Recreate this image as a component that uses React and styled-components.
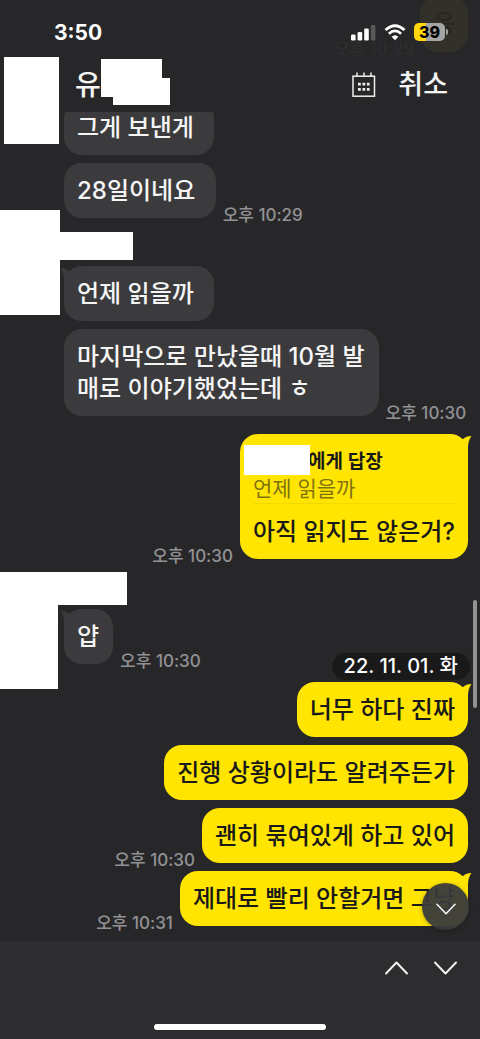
import styled, { createGlobalStyle } from "styled-components";

const App = () => {
  return (
    <Screen>
      <GlobalStyle />
      <Header>
        <GhostBubble aria-hidden="true">응</GhostBubble>
        <GhostTime aria-hidden="true">오후 10:29</GhostTime>
        <StatusBar>
          <Clock>3:50</Clock>
          <StatusIcons>
            <SignalIcon />
            <WifiIcon />
            <Battery>
              <BatteryLevel>39</BatteryLevel>
              <BatteryCap />
            </Battery>
          </StatusIcons>
        </StatusBar>
        <NavBar>
          <Title>유</Title>
          <NavButton aria-label="날짜 선택">
            <CalendarIcon />
          </NavButton>
          <NavButton>취소</NavButton>
        </NavBar>
        <Mask $x={4} $y={57} $w={55} $h={87} />
        <Mask $x={101} $y={59} $w={61} $h={38} />
        <Mask $x={113} $y={78} $w={57} $h={27} />
      </Header>

      <Chat>
        <Group>
          <Message text={"그게 보낸게 "} />
          <Message text={"28일이네요 "} time="오후 10:29" />
        </Group>
        <Group $gap={16}>
          <Mask $x={0} $y={-24} $w={60} $h={105} />
          <Mask $x={60} $y={-2} $w={73} $h={28} />
          <Sender />
          <Message text={"언제 읽을까 "} tail />
          <Message
            text={"마지막으로 만났을때 10월 발\n매로 이야기했었는데 ㅎ"}
            time="오후 10:30"
          />
        </Group>
        <Group $gap={18}>
          <Row $mine>
            <Bubble $mine>
              <Tail mine />
              <Mask $x={4} $y={11} $w={66} $h={30} />
              <ReplyTo>에게 답장</ReplyTo>
              <Quote>언제 읽을까</Quote>
              아직 읽지도 않은거?
            </Bubble>
            <Time>오후 10:30</Time>
          </Row>
        </Group>
        <Group $gap={18}>
          <Mask $x={0} $y={-5} $w={127} $h={33} />
          <Mask $x={0} $y={28} $w={58} $h={84} />
          <Sender />
          <Message text="얍" time="오후 10:30" tail />
        </Group>
        <Group $gap={18}>
          <DateChip>22. 11. 01. 화</DateChip>
          <Message mine text="너무 하다 진짜" tail />
          <Message mine text="진행 상황이라도 알려주든가" />
          <Message mine text="괜히 묶여있게 하고 있어" time="오후 10:30" />
          <Message mine text="제대로 빨리 안할거면 그냥" time="오후 10:31" tail />
        </Group>
        <ScrollThumb />
        <JumpButton aria-label="맨 아래로">
          <Chevron width={20} />
        </JumpButton>
      </Chat>

      <Footer>
        <SearchNav>
          <NavButton aria-label="이전 결과">
            <Chevron width={23} up />
          </NavButton>
          <NavButton aria-label="다음 결과">
            <Chevron width={23} />
          </NavButton>
        </SearchNav>
        <HomeIndicator />
      </Footer>
    </Screen>
  );
};

const Message = ({ text, time, mine, tail }) => (
  <Row $mine={mine}>
    <Bubble $mine={mine}>
      {tail && <Tail mine={mine} />}
      {text}
    </Bubble>
    {time && <Time>{time}</Time>}
  </Row>
);

const Tail = ({ mine }) => (
  <TailSvg $mine={mine} width="16" height="20" viewBox="0 0 16 20">
    <path d="M4 8 L7 5 Q10 2.2 15.5 2 Q12.3 6 12 13 L12 18 L4 18 Z" />
  </TailSvg>
);

const SignalIcon = () => (
  <svg width="25" height="17" viewBox="0 0 25 17" fill="#fff">
    <rect x="0" y="10.5" width="4.6" height="6" rx="1.3" />
    <rect x="6.6" y="8" width="4.6" height="8.5" rx="1.3" />
    <rect x="13.2" y="4.5" width="4.6" height="12" rx="1.3" />
    <rect x="19.8" y="1" width="4.6" height="15.5" rx="1.3" fill="#59595b" />
  </svg>
);

const WifiIcon = () => (
  <svg width="22" height="17" viewBox="0 0 22 17" fill="none">
    <path d="M1.5 6 Q11 -2.6 20.5 6" stroke="#fff" strokeWidth="2.8" />
    <path d="M4.9 9.7 Q11 4.2 17.1 9.7" stroke="#fff" strokeWidth="2.7" />
    <path d="M7.6 12.8 Q11 9.8 14.4 12.8 L11 16.2 Z" fill="#fff" />
  </svg>
);

const CalendarIcon = () => (
  <svg width="24" height="26" viewBox="0 0 24 26" fill="none" stroke="#f0f0f0">
    <rect x="1" y="4.2" width="21.5" height="20" strokeWidth="1.5" />
    <path d="M5 0.5V4 M12 0.5V4 M19 0.5V4" strokeWidth="1.5" />
    <path
      d="M6 12.2H8.8 M10.5 12.2H13.2 M14.9 12.2H17.6 M6 17.4H8.8 M10.5 17.4H13.2 M14.9 17.4H17.6"
      strokeWidth="2.8"
    />
  </svg>
);

const Chevron = ({ width, up }) => (
  <svg
    width={width}
    height={Math.round(width * 0.6)}
    viewBox="0 0 23 14"
    fill="none"
    stroke="#f4f4f4"
    strokeWidth="1.9"
    strokeLinecap="round"
    strokeLinejoin="round"
  >
    <path d={up ? "M1 12.5 L11.5 1.5 L22 12.5" : "M1 1.5 L11.5 12.5 L22 1.5"} />
  </svg>
);

const GlobalStyle = createGlobalStyle`
  * {
    box-sizing: border-box;
  }
  body {
    margin: 0;
    background: #272729;
    color: #f5f5f5;
    font-family: Inter, "Noto Sans CJK KR", sans-serif;
    font-weight: 500;
  }
  svg {
    display: block;
  }
`;

const Screen = styled.div`
  display: flex;
  flex-direction: column;
  min-height: 100vh;
  overflow: hidden;
`;

const Header = styled.header`
  position: relative;
  z-index: 1;
  padding-bottom: 2px;
  background: #272729;
`;

const GhostBubble = styled.div`
  position: absolute;
  top: -4px;
  right: 12px;
  padding: 12px 13px;
  border-radius: 18px;
  background: #33302a;
  color: #272622;
  font-size: 24px;
  line-height: 32px;
`;

const GhostTime = styled.div`
  position: absolute;
  top: 39px;
  right: 66px;
  color: #2d2d2f;
  font-size: 17px;
  line-height: 20px;
`;

const StatusBar = styled.div`
  position: relative;
  display: flex;
  align-items: center;
  justify-content: space-between;
  height: 60px;
  padding: 4px 32px 0 54px;
`;

const Clock = styled.span`
  color: #fff;
  font-size: 21px;
  font-weight: 700;
`;

const StatusIcons = styled.div`
  display: flex;
  align-items: center;
  gap: 8px;
`;

const Battery = styled.div`
  display: flex;
  align-items: center;
  gap: 1px;
`;

const BatteryLevel = styled.span`
  width: 31px;
  height: 18px;
  border-radius: 5px;
  background: linear-gradient(to right, #ffd60a 39%, #a5a5a5 39%);
  color: #000;
  font-size: 16px;
  font-weight: 800;
  line-height: 18px;
  text-align: center;
`;

const BatteryCap = styled.span`
  width: 2px;
  height: 6px;
  border-radius: 0 2px 2px 0;
  background: #a5a5a5;
`;

const NavBar = styled.nav`
  display: flex;
  align-items: center;
  gap: 22px;
  height: 50px;
  padding: 0 32px 0 75px;
`;

const Title = styled.h1`
  flex: 1;
  margin: 0;
  font-size: 28px;
  font-weight: 500;
  line-height: 36px;
`;

const NavButton = styled.button`
  padding: 0;
  border: 0;
  background: none;
  color: #f5f5f5;
  font: inherit;
  font-size: 27px;
  line-height: 36px;
`;

/* white block that hides names and profile photos */
const Mask = styled.div`
  position: absolute;
  z-index: 1;
  left: ${(props) => props.$x}px;
  top: ${(props) => props.$y}px;
  width: ${(props) => props.$w}px;
  height: ${(props) => props.$h}px;
  background: #fff;
`;

const Chat = styled.main`
  position: relative;
  flex: 1;
  margin-top: -12px;
  padding-bottom: 15px;
`;

const Group = styled.section`
  position: relative;
  display: flex;
  flex-direction: column;
  gap: 8px;
  margin-top: ${(props) => props.$gap || 0}px;
  padding: 0 12px 0 64px;
`;

const Sender = styled.div`
  height: 24px;
`;

const Row = styled.div`
  display: flex;
  flex-direction: ${(props) => (props.$mine ? "row-reverse" : "row")};
  align-items: flex-end;
  gap: 7px;
  margin-left: ${(props) => (props.$mine ? "-52px" : "0")};
  margin-right: ${(props) => (props.$mine ? "0" : "-12px")};
`;

const Bubble = styled.div`
  position: relative;
  padding: 12px ${(props) => (props.$mine ? 13 : 14)}px 11px 13px;
  border-radius: 18px;
  background: ${(props) => (props.$mine ? "#ffe500" : "#3b3b3d")};
  color: ${(props) => (props.$mine ? "#191919" : "#f5f5f5")};
  font-size: 24px;
  line-height: 32px;
  white-space: pre;
`;

const TailSvg = styled.svg`
  position: absolute;
  top: 0;
  ${(props) => (props.$mine ? "right: -4px;" : "left: -4px;")}
  transform: ${(props) => (props.$mine ? "none" : "scaleX(-1)")};
  fill: ${(props) => (props.$mine ? "#ffe500" : "#3b3b3d")};
`;

const ReplyTo = styled.div`
  padding: 4px 0 0 55px;
  font-size: 19px;
  font-weight: 600;
  line-height: 24px;
`;

const Quote = styled.div`
  margin-bottom: 12px;
  border-bottom: 1px solid #f2d900;
  color: #7f7410;
  font-size: 21px;
  font-weight: 400;
  line-height: 29px;
`;

const Time = styled.time`
  margin-bottom: -7px;
  color: #929294;
  font-size: 17px;
  line-height: 20px;
  white-space: nowrap;
`;

const DateChip = styled.div`
  position: absolute;
  top: -29px;
  right: 10px;
  padding: 0 12px;
  border-radius: 14px;
  background: #19191a;
  color: #fff;
  font-size: 20px;
  line-height: 27px;
`;

const ScrollThumb = styled.div`
  position: absolute;
  top: 500px;
  right: 3px;
  width: 4px;
  height: 108px;
  border-radius: 2px;
  background: #939394;
`;

const JumpButton = styled.button`
  position: absolute;
  right: 11px;
  bottom: 11px;
  display: flex;
  align-items: center;
  justify-content: center;
  width: 47px;
  height: 47px;
  padding: 4px 0 0;
  border: 0;
  border-radius: 50%;
  background: rgba(58, 58, 60, 0.95);
  box-shadow: 0 1px 4px rgba(0, 0, 0, 0.3);
`;

const Footer = styled.footer`
  display: flex;
  flex-direction: column;
  align-items: center;
  justify-content: space-between;
  height: 98px;
  padding: 20px 0 9px;
  background: #2d2d2f;
`;

const SearchNav = styled.div`
  display: flex;
  align-self: flex-end;
  gap: 26px;
  padding-right: 23px;
`;

const HomeIndicator = styled.div`
  width: 36%;
  height: 6px;
  border-radius: 3px;
  background: #fff;
`;

export default App;
